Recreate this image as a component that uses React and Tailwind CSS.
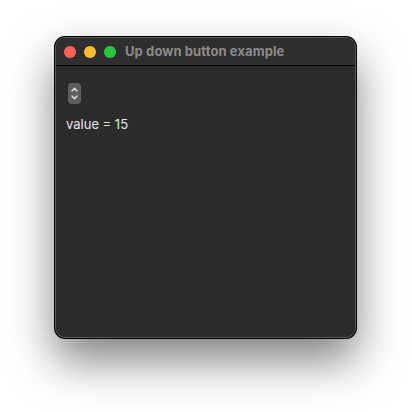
export default function App() {
  return (
    <div className="w-[412px] h-[412px] bg-white relative" style={{ fontFamily: '"Inter", "Liberation Sans", sans-serif' }}>
      <div className="absolute left-[55px] top-[37px] w-[301px] h-[301px] rounded-[10px] bg-[#2b2b2b] border border-[#5a5a5a] shadow-[0_0_0_1px_#000,0_22px_45px_rgba(0,0,0,0.5)] flex flex-col overflow-hidden">
        <div className="h-[28px] flex items-center px-[8px] gap-[8px] bg-[#2e2e2e] border-b border-black shrink-0">
          <span className="w-[12px] h-[12px] rounded-full bg-[#fe5f57]" />
          <span className="w-[12px] h-[12px] rounded-full bg-[#febc2e]" />
          <span className="w-[12px] h-[12px] rounded-full bg-[#28c840]" />
          <span className="ml-[1px] text-[13px] font-bold text-[#8a8a8a] tracking-[0.1px]">Up down button example</span>
        </div>
        <div className="flex flex-col items-start pl-[10px] pt-[17px]">
          <div className="ml-[2px] w-[13px] h-[21px] rounded-[4px] bg-[#5e5e5e] flex flex-col items-center justify-center gap-[3px]">
            <svg width="7" height="5" viewBox="0 0 7 5"><path d="M1 4 L3.5 1.3 L6 4" fill="none" stroke="#e8e8e8" strokeWidth="1.3" strokeLinecap="round" strokeLinejoin="round" /></svg>
            <svg width="7" height="5" viewBox="0 0 7 5"><path d="M1 1 L3.5 3.7 L6 1" fill="none" stroke="#e8e8e8" strokeWidth="1.3" strokeLinecap="round" strokeLinejoin="round" /></svg>
          </div>
          <div className="mt-[12px] text-[13px] text-[#e6e6e6] leading-[16px]">value = 15</div>
        </div>
      </div>
    </div>
  );
}
